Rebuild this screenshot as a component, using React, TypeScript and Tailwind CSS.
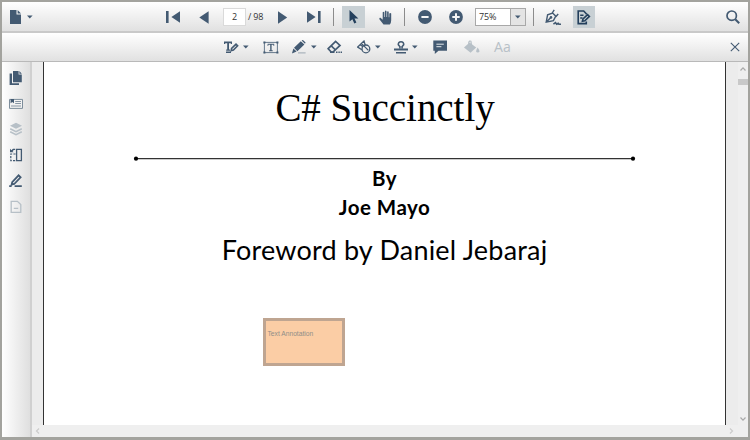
import type { ReactNode } from 'react';

const INK = '#435a72';

function Icon({ w = 16, h = 16, className = '', children }: { w?: number; h?: number; className?: string; children: ReactNode }) {
  return (
    <svg width={w} height={h} viewBox={`0 0 ${w} ${h}`} className={`block shrink-0 ${className}`} fill={INK}>
      {children}
    </svg>
  );
}

function Caret({ className = '' }: { className?: string }) {
  return (
    <Icon w={6} h={4} className={className}>
      <path d="M0 0.5H5.6L2.8 3.6Z" />
    </Icon>
  );
}

function Separator({ className = '' }: { className?: string }) {
  return <div className={`h-[18px] w-px shrink-0 bg-[#8c8c8c] ${className}`} />;
}

function MainToolbar() {
  return (
    <div className="flex h-[31px] shrink-0 items-center border-b-2 border-[#c9c9c9] bg-linear-to-b from-white to-[#e1e1e1] pt-px">
      <Icon w={12} h={14} className="ml-[8px]">
        <path d="M0 0H6.5V4.5H11V14H0Z" />
        <path d="M7.6 0L11 3.5H7.6Z" />
      </Icon>
      <Caret className="ml-[5px]" />
      <Icon w={15} h={12} className="ml-[133px]">
        <path d="M0 0H2.6V12H0ZM14 0.3V11.7L5.4 6Z" />
      </Icon>
      <Icon w={10} h={13} className="ml-[18px]">
        <path d="M9.6 0.3V12.7L0.3 6.5Z" />
      </Icon>
      <div className="ml-[14px] flex h-[18px] w-[23px] shrink-0 items-center justify-center border border-[#dadada] bg-white font-['Open_Sans',sans-serif] text-[9px] text-[#333]">2</div>
      <div className="ml-[2px] w-[18px] shrink-0 whitespace-nowrap font-['Open_Sans',sans-serif] text-[9px] tracking-[-0.2px] text-[#333]">/ 98</div>
      <Icon w={10} h={13} className="ml-[12px]">
        <path d="M0 0.3V12.7L9.2 6.5Z" />
      </Icon>
      <Icon w={15} h={12} className="ml-[19px]">
        <path d="M0 0.3V11.7L8.6 6ZM11 0H13.6V12H11Z" />
      </Icon>
      <Separator className="ml-[11px]" />
      <div className="ml-[8px] flex h-[22px] w-[23px] shrink-0 items-center justify-center bg-[#c8d0d4]">
        <Icon w={10} h={14}>
          <path fill="#233f5c" d="M0.5 0V11.5L3.4 9.2L5.3 13.4L7.4 12.4L5.5 8.4H9.4Z" />
        </Icon>
      </div>
      <Icon w={14} h={15} className="ml-[14px]">
        <path d="M4.5 14.5L0.4 9.2Q0 7.6 1.5 7.8L3.7 9.7V2.2Q4.5 1.1 5.3 2.2V7H5.9V1.2Q6.7 0 7.5 1.2V7H8.1V1.8Q8.9 0.8 9.7 1.8V7.2H10.3V3.5Q11.4 2.7 12.2 3.5V10.3Q12.2 12.8 10.8 14.5Z" />
      </Icon>
      <Separator className="ml-[11px]" />
      <Icon w={14} h={14} className="ml-[13px]">
        <circle cx="7" cy="7" r="6.9" />
        <path fill="#f6f6f6" d="M3.4 6H10.6V8H3.4Z" />
      </Icon>
      <Icon w={14} h={14} className="ml-[17px]">
        <circle cx="7" cy="7" r="6.9" />
        <path fill="#f6f6f6" d="M3.3 6H6V3.3H8V6H10.7V8H8V10.7H6V8H3.3Z" />
      </Icon>
      <div className="ml-[12px] flex h-[18px] w-[51px] shrink-0 border border-[#a8a8a8] bg-white">
        <div className="flex w-[34px] items-center pl-[3px] font-['Open_Sans',sans-serif] text-[9px] tracking-[-0.2px] text-[#333]">75%</div>
        <div className="flex flex-1 items-center justify-center border-l border-[#a8a8a8] bg-[#e4e4e4]">
          <Caret />
        </div>
      </div>
      <Separator className="ml-[7px]" />
      <Icon w={17} h={17} className="ml-[11px]">
        <g fill="none" stroke={INK} strokeWidth="1.4">
          <path d="M1.2 13.2L2.6 5.8L7.6 4L10.8 7.2L8.4 11.6ZM1.2 13.2L5.6 8.8M7.2 4L9.2 0.8M10.8 7.8L13.2 5" />
          <path strokeWidth="1.6" d="M8.4 15.2L10.5 13.6L11.6 15.2L13.2 14.2L14 15.2H16" />
        </g>
        <circle cx="6" cy="8.4" r="1.3" />
      </Icon>
      <div className="ml-[11px] flex h-[22px] w-[22px] shrink-0 items-center justify-center bg-[#c8d0d4]">
        <Icon w={14} h={15}>
          <g fill="none" stroke="#233f5c" strokeWidth="1.6">
            <path d="M9.3 4.6V3.8L6.7 1H1.2V13.6H9.3V11.4M3.2 5.2H6.5M3.2 8H5.5" />
            <path d="M5.4 11.2L6 9L10.6 4.6L12.4 6.4L7.8 10.8Z" />
          </g>
        </Icon>
      </div>
      <Icon w={14} h={14} className="ml-auto mr-[8px]">
        <g fill="none" stroke={INK} strokeWidth="1.7">
          <circle cx="5.7" cy="5.7" r="4.7" />
          <path strokeWidth="2" d="M9.2 9.2L13.2 13.2" />
        </g>
      </Icon>
    </div>
  );
}

function AnnotationToolbar() {
  return (
    <div className="flex h-[29px] shrink-0 items-center border-b border-[#b9b9b9] bg-linear-to-b from-white to-[#e1e1e1]">
      <Icon w={15} h={12} className="ml-[222px]">
        <path d="M0 0.4H8V3H6.8V2.2H5V8.6H6V9.8H2.2V8.6H3.2V2.2H1.2V3H0Z" />
        <path fill="none" stroke={INK} strokeWidth="1.6" d="M7.2 9.6L7.6 7.4L12 3.2L13.6 4.8L9.4 9ZM2 11.2H7" />
      </Icon>
      <Caret className="ml-[4px]" />
      <Icon w={16} h={13} className="ml-[14px]">
        <path fill="none" stroke={INK} strokeWidth="0.8" d="M1.4 1.4H14.4V11.6H1.4Z" />
        <path d="M0.4 0.4H2.4V2.4H0.4ZM13.4 0.4H15.4V2.4H13.4ZM0.4 10.6H2.4V12.6H0.4ZM13.4 10.6H15.4V12.6H13.4Z" />
        <path d="M4.6 2.8H11.2V4.9H10.5V3.7H8.6V9.3H9.7V10.2H6.1V9.3H7.2V3.7H5.3V4.9H4.6Z" />
      </Icon>
      <Icon w={15} h={14} className="ml-[13px]">
        <path d="M2 7.8L8.8 1.2L12.4 4.4L5.4 11.2ZM9.6 0.6L10.9 0L13.6 2.6L13 3.8ZM1.4 8.6L4.6 11.6L0.6 13.2H0Z" />
        <path fill="#9aa6b1" d="M6 12.4H13.6V13.4H6Z" />
      </Icon>
      <Caret className="ml-[4px]" />
      <Icon w={16} h={14} className="ml-[10px]">
        <g fill="none" stroke={INK} strokeWidth="1.7">
          <path d="M1.2 8.7L8.6 1.4L13 5.4L6 12H4.2Z" />
          <path d="M4.2 5.8L8.6 10" />
        </g>
        <path d="M3 11.4H7.5V13H3ZM9 11.6H10.5V13H9ZM11.4 11.6H12.8V13H11.4ZM13.6 11.6H15V13H13.6Z" />
      </Icon>
      <Icon w={15} h={14} className="ml-[14px]">
        <g fill="none" stroke={INK} strokeWidth="1.3">
          <circle cx="8.9" cy="8.9" r="3.9" />
          <path d="M4.8 9.8L0.7 7.1L7 1L8.3 5.2M4.6 3.6L11.4 10.4M3.4 5L6 6.6" />
        </g>
      </Icon>
      <Caret className="ml-[3px]" />
      <Icon w={15} h={13} className="ml-[13px]">
        <path fill="none" stroke={INK} strokeWidth="1.6" d="M5.8 7.6L6 5.8L4.3 3.8Q4.2 0.8 7 0.8Q9.8 0.8 9.7 3.8L8 5.8L8.2 7.6" />
        <path d="M0 7.5H14V9.6H0ZM2 11H12V12.5H2Z" />
      </Icon>
      <Caret className="ml-[3px]" />
      <Icon w={15} h={14} className="ml-[15px]">
        <path d="M0.3 0.5H14V10.8H5.5L1.8 14V10.8H0.3Z" />
        <path stroke="#e5e9ec" strokeWidth="1" d="M3.4 4.2H10.8M3.4 6.7H8.4" />
      </Icon>
      <Icon w={16} h={14} className="ml-[16px]">
        <g fill="#b7c0c7">
          <path d="M0 7.6L5.6 2.4L12.2 7.6L6.6 12.8Z" />
          <path d="M13.6 7.6Q17 12.2 13.8 12.6Q10.8 12.4 13.6 7.6Z" />
          <path fill="none" stroke="#b7c0c7" strokeWidth="1.2" d="M4.8 5V2.2Q5.6 0.5 6.9 1.2L7.7 6.6" />
        </g>
      </Icon>
      <div className="ml-[14px] shrink-0 font-['Open_Sans',sans-serif] text-[14px] leading-none tracking-[0.2px] text-[#b7c0c7]">Aa</div>
      <Icon w={10} h={10} className="ml-auto mr-[8px]">
        <path stroke={INK} strokeWidth="1.1" d="M0.8 0.8L9.2 9.2M9.2 0.8L0.8 9.2" />
      </Icon>
    </div>
  );
}

function SidePanel() {
  return (
    <div className="flex w-[30px] shrink-0 flex-col items-center gap-[12px] border-r-2 border-[#d0d0d0] bg-linear-to-r from-white to-[#dfdfdf] pt-[9px]">
      <Icon w={14} h={14}>
        <path d="M4 0H9.6V3.6H12.8V11.2H4ZM10.4 0L12.8 2.8H10.4ZM0.6 2.4H3V12.2H10V14H0.6Z" />
      </Icon>
      <Icon w={14} h={14}>
        <path fill="#f2f2f2" stroke="#7d8d9b" strokeWidth="1" d="M0.5 2.4H13.5V11.4H0.5Z" />
        <path d="M1.6 2H5V6.2L3.3 5L1.6 6.2Z" />
        <path fill="#8796a4" d="M6.2 4H12V5H6.2ZM6.2 6H12V7H6.2ZM2 8.4H12V9.4H2Z" />
      </Icon>
      <Icon w={14} h={14} className="-mt-px">
        <path fill="#b7c0c7" d="M7 0.8L13 3.8L7 6.8L1 3.8Z" />
        <path fill="none" stroke="#b7c0c7" strokeWidth="1.5" d="M1.2 6.8L7 9.6L12.8 6.8M1.2 9.8L7 12.6L12.8 9.8" />
      </Icon>
      <Icon w={14} h={14}>
        <path fill="none" stroke={INK} strokeWidth="1.3" d="M7.6 1.4H12.4V12.6H7.6Z" />
        <path fill="none" stroke={INK} strokeWidth="1.2" strokeDasharray="2.2 1.2" d="M6.6 6H1.8V12.6H6.6" />
        <path d="M6.2 0.8V2H4.8L3.6 3.2L4.6 4.2H1V0.8L2.4 2.2L4 0.8Z" />
      </Icon>
      <Icon w={14} h={14}>
        <path fill="none" stroke={INK} strokeWidth="1.8" d="M2.6 10.6L3.2 8.2L9.6 1.4L11.6 3.3L5.2 10Z" />
        <path d="M0.2 11.2H3.2L2.4 13H0.2ZM5.6 11.2H12.8V13H5.6Z" />
      </Icon>
      <Icon w={14} h={14}>
        <g fill="none" stroke="#b7c0c7" strokeWidth="1.3">
          <path d="M2.2 1.4H8.4L11.8 4.6V12.4H2.2ZM4.8 8.4H9.2" />
        </g>
      </Icon>
    </div>
  );
}

function DocumentPage() {
  return (
    <div className="flex flex-1 flex-col items-center border-x border-[#333] bg-white text-black">
      <div className="mt-[20px] h-[52px] whitespace-nowrap pl-px font-['Liberation_Serif',serif] text-[39px] leading-[52px] tracking-[-0.05px]">C# Succinctly</div>
      <Icon w={503} h={7} className="mt-[21px] mr-px">
        <path stroke="#333" strokeWidth="1.3" d="M3 3.7H500" />
        <circle cx="3" cy="3.7" r="2.1" fill="#000" />
        <circle cx="500" cy="3.7" r="2.1" fill="#000" />
      </Icon>
      <div className="mt-[2px] h-[29px] font-['Lato',sans-serif] text-[20.5px] font-bold leading-[28px] tracking-[0.4px]">By</div>
      <div className="h-[29px] font-['Lato',sans-serif] text-[20.5px] font-bold leading-[28px] tracking-[0.5px]">Joe Mayo</div>
      <div className="mt-[7px] h-[40px] whitespace-nowrap font-['Lato',sans-serif] text-[27px] leading-[41px] tracking-[0.2px]">Foreword by Daniel Jebaraj</div>
      <div className="mt-[49px] mr-[162px] h-[48px] w-[82px] whitespace-nowrap border-[3px] border-[#bfa591] bg-[#fbcda5] pl-[2px] pt-[8px] font-['Liberation_Sans',sans-serif] text-[6.7px] leading-[10px] text-[#8f8d88]">Text Annotation</div>
    </div>
  );
}

function Chevron({ d, className = '', color = '#a9a9a9' }: { d: string; className?: string; color?: string }) {
  return (
    <Icon w={8} h={8} className={className}>
      <path d={d} fill="none" stroke={color} strokeWidth="1.2" />
    </Icon>
  );
}

export default function App() {
  return (
    <div className="flex h-[440px] w-[750px] flex-col overflow-hidden border-2 border-b-[3px] border-[#a3a39e] bg-[#efefef]">
      <MainToolbar />
      <AnnotationToolbar />
      <div className="flex min-h-0 flex-1">
        <SidePanel />
        <div className="flex flex-1 flex-col">
          <div className="flex min-h-0 flex-1 bg-[#ececec] pl-[11px]">
            <DocumentPage />
            <div className="w-[12px]" />
            <div className="flex w-[10px] flex-col items-center bg-[#efefef] pt-[3px]">
              <Chevron d="M1.5 5.5L4 2.8L6.5 5.5" />
              <div className="mt-[6px] h-[6px] w-full bg-[#c9c9c9]" />
              <Chevron d="M1.5 2.5L4 5.2L6.5 2.5" className="mt-auto mb-[2px]" />
            </div>
          </div>
          <div className="flex h-[12px] items-center justify-between bg-[#efefef] pl-[2px] pr-[13px]">
            <Chevron d="M5 1.5L2.5 4L5 6.5" color="#cccccc" />
            <Chevron d="M3 1.5L5.5 4L3 6.5" color="#cccccc" />
          </div>
        </div>
      </div>
    </div>
  );
}
